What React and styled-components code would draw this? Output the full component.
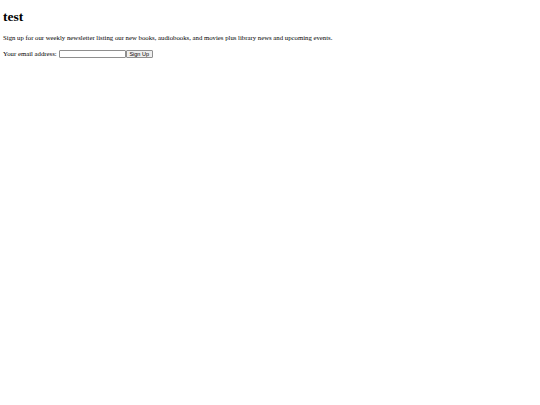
import React from 'react'
import styled, { createGlobalStyle } from 'styled-components'

// sizes are the browser defaults shrunk by 540/1280
const GlobalStyle = createGlobalStyle`
    html {
        background: #ffffff;
    }
    body {
        margin: 0;
        font-family: "Liberation Serif", "Times New Roman", serif;
        font-size: 6.75px;
        color: #000000;
    }
`

const Page = styled.div`
    padding: 0 3px;
    display: flow-root;
`

const Title = styled.h1`
    font-size: 13.5px;
    font-weight: bold;
    line-height: 15px;
    margin: 9px 0 10px;
`

const Intro = styled.p`
    margin: 0 0 8px;
    line-height: 8px;
`

const Form = styled.form`
    margin: 0;
    display: flex;
    align-items: center;
    height: 8px;
`

const Label = styled.label`
    margin-right: 2px;
    line-height: 8px;
`

const EmailInput = styled.input`
    box-sizing: border-box;
    width: 67px;
    height: 8px;
    padding: 0 1px;
    border: 1px solid #8f8f8f;
    border-radius: 1px;
    font: 5.5px "Liberation Sans", Arial, sans-serif;
    margin: 0;
    outline: none;
`

const SubmitButton = styled.button`
    box-sizing: border-box;
    font: 5.5px "Liberation Sans", Arial, sans-serif;
    width: 27px;
    height: 8px;
    padding: 0;
    margin: 0;
    background: #efefef;
    border: 1px solid #8f8f8f;
    border-radius: 1px;
    color: #000000;
    display: flex;
    align-items: center;
    justify-content: center;
`

const App = () => {
    return <>
        <GlobalStyle />
        <Page>
            <Title>test</Title>
            <Intro>
                Sign up for our weekly newsletter listing our new books, audiobooks, and movies plus library news and upcoming events.
            </Intro>
            <Form onSubmit={e => e.preventDefault()}>
                <Label htmlFor="email">Your email address:</Label>
                <EmailInput id="email" type="text" />
                <SubmitButton type="submit">Sign Up</SubmitButton>
            </Form>
        </Page>
    </>
}

export default App
